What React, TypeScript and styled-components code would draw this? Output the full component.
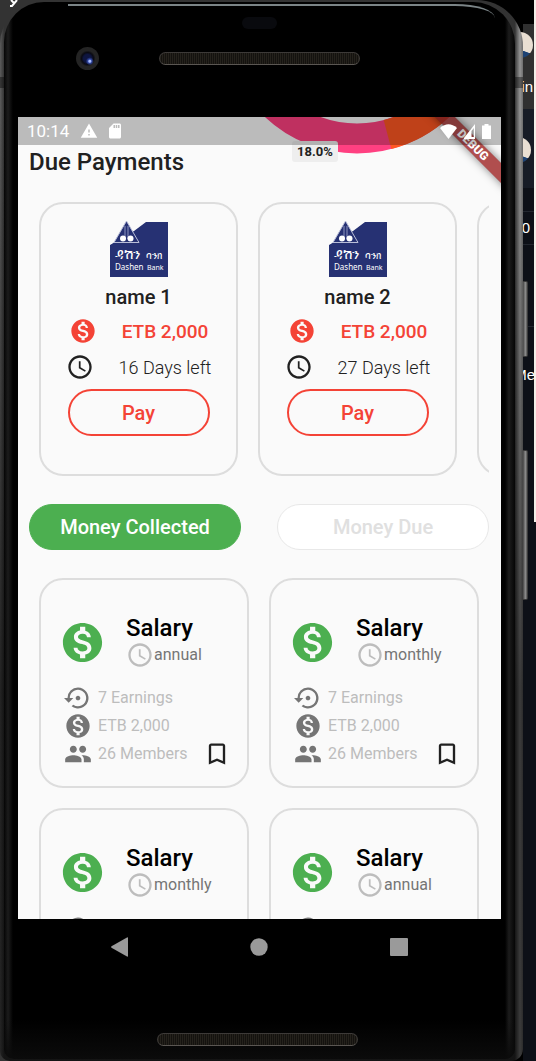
import React from "react";
import styled, { createGlobalStyle } from "styled-components";
import {
  MdAccessTime,
  MdBookmarkBorder,
  MdMonetizationOn,
  MdPeople,
  MdSdCard,
  MdSettingsBackupRestore,
  MdWarning,
} from "react-icons/md";

const GlobalStyle = createGlobalStyle`
  * { box-sizing: border-box; }
  body { margin: 0; background: #0d1017; font-family: Roboto, "Liberation Sans", sans-serif; }
  button { font-family: inherit; margin: 0; padding: 0; border: 0; background: none; cursor: pointer; }
  h1, h2, p { margin: 0; }
  svg { display: block; flex: none; }
`;

/* ---------- desktop behind the emulator ---------- */

const Desktop = styled.div`
  position: relative;
  display: flex;
  height: 100vh;
  overflow: hidden;
  background: linear-gradient(90deg, #333 50%, #000 50%);
`;

const CornerMark = styled.svg`
  position: absolute;
  top: 0;
  left: 9px;
`;

const Strip = styled.aside`
  position: relative;
  flex: none;
  width: 13px;
  background: #0d1017;
`;

const StripTile = styled.div<{ $height: number; $bg?: string; $pad?: number; $line?: boolean }>`
  display: flex;
  flex-direction: column;
  align-items: flex-end;
  height: ${(p) => p.$height}px;
  padding-right: ${(p) => p.$pad ?? 3}px;
  border-top: ${(p) => (p.$line ? "1px solid #22262e" : "0")};
  background: ${(p) => p.$bg ?? "#0d1017"};
  color: #fff;
  font: 15px/20px "Liberation Sans", sans-serif;
`;

const StripLabel = styled.span<{ $gap: number }>`
  flex: none;
  margin-top: ${(p) => p.$gap}px;
`;

const Avatar = styled.span<{ $gap: number }>`
  flex: none;
  width: 26px;
  height: 26px;
  margin-top: ${(p) => p.$gap}px;
  border-radius: 50%;
  background: linear-gradient(200deg, #e9dfd3 62%, #1d4273 64%);
`;

const StripEdge = styled.div`
  position: absolute;
  top: 0;
  right: 0;
  width: 2px;
  height: 522px;
  background: #f3eee8;
`;

const SideKey = styled.div<{ $top: number; $height: number }>`
  position: absolute;
  top: ${(p) => p.$top}px;
  left: 0;
  width: 5px;
  height: ${(p) => p.$height}px;
  border: 1px solid #3a3a3a;
  border-left: 0;
  border-radius: 0 2px 2px 0;
  background: linear-gradient(90deg, #444, #8c8c8c 60%, #555);
`;

/* ---------- phone ---------- */

const Rim = styled.div`
  position: relative;
  z-index: 1;
  flex: 1;
  min-width: 0;
  display: flex;
  padding: 2px 8px 2px 4px;
  border-radius: 44px 46px 12px 10px;
  background:
    linear-gradient(180deg, transparent 77px, rgba(0, 0, 0, 0.4) 77px, rgba(0, 0, 0, 0.4) 88px, transparent 88px),
    linear-gradient(180deg, transparent 10%, rgba(0, 0, 0, 0.6) 65%),
    linear-gradient(90deg, #5c5c5c, #333 4px, #333 calc(100% - 8px), #4a4a4a calc(100% - 7px), #949494 calc(100% - 3px), #6e6e6e);
`;

const Body = styled.div`
  position: relative;
  flex: 1;
  min-width: 0;
  display: flex;
  flex-direction: column;
  padding: 0 14px;
  border-radius: 40px 42px 10px 10px;
  background:
    linear-gradient(0deg, #0b0b0b, transparent 40px),
    linear-gradient(90deg, #050505, #1c1c1c 4px, #000 9px, #000 calc(100% - 10px), #1c1c1c calc(100% - 6px), #050505);
`;

const Shine = styled.div`
  position: absolute;
  top: 2px;
  left: 64px;
  right: 20px;
  height: 14px;
  border-top: 2px solid #7b8487;
  border-top-right-radius: 40px 14px;
`;

const TopBezel = styled.header`
  flex: none;
  height: 115px;
  display: flex;
  flex-direction: column;
  align-items: center;
  padding-top: 15px;
`;

const Sensor = styled.span`
  width: 35px;
  height: 12px;
  border-radius: 6px;
  background: #090a0e;
`;

const BezelRow = styled.div`
  align-self: stretch;
  display: grid;
  grid-template-columns: 1fr 201px 1fr;
  align-items: center;
  justify-items: center;
  margin-top: 18px;
`;

const Camera = styled.span`
  width: 23px;
  height: 23px;
  margin-right: 3px;
  border-radius: 50%;
  background:
    radial-gradient(circle at 60% 62%, #a9bcff 0 1px, rgba(59, 86, 192, 0.8) 2px, transparent 4px),
    radial-gradient(circle at 50% 50%, #0e1540 4px, #0a0a12 6px, #242424 8px);
`;

const Speaker = styled.span`
  width: 201px;
  height: 13px;
  border: 1px solid #3d3a38;
  border-bottom-color: #5a5652;
  border-radius: 7px;
  background: repeating-linear-gradient(90deg, #25221c 0 1px, #14120f 1px 2px);
`;

const Screen = styled.main`
  position: relative;
  flex: 1;
  min-height: 0;
  overflow: hidden;
  background: #fafafa;
  color: #212121;
`;

const BottomBezel = styled.footer`
  flex: none;
  height: 84px;
  display: flex;
  align-items: flex-end;
  justify-content: center;
  padding: 0 4px 13px 0;
`;

const NavBar = styled.nav`
  flex: none;
  height: 56px;
  display: grid;
  grid-template-columns: repeat(3, 1fr);
  place-items: center;
  padding: 0 32px;
`;

/* ---------- status bar and overlays ---------- */

const StatusBar = styled.div`
  position: absolute;
  top: 0;
  left: 0;
  right: 0;
  display: flex;
  align-items: center;
  gap: 11px;
  height: 28px;
  padding: 0 10px 0 9px;
  background: rgba(0, 0, 0, 0.25);
  color: #fff;
  font-size: 17px;
`;

const StatusIcons = styled.span<{ $end?: boolean }>`
  display: flex;
  align-items: center;
  gap: ${(p) => (p.$end ? 7 : 8)}px;
  margin-left: ${(p) => (p.$end ? "auto" : "0")};
`;

const DebugBanner = styled.div`
  position: absolute;
  top: 21px;
  right: -27px;
  width: 110px;
  transform: rotate(45deg);
  background: rgba(160, 40, 40, 0.82);
  box-shadow: 0 0 8px rgba(0, 0, 0, 0.5);
  color: #fff;
  font-size: 12px;
  font-weight: 900;
  line-height: 14px;
  text-align: center;
`;

/* ---------- chart and payments ---------- */

const ChartTail = styled.section`
  position: relative;
  height: 28px;
`;

const Donut = styled.svg`
  position: absolute;
  top: 0;
  left: 240px;
`;

const SliceLabel = styled.span`
  position: absolute;
  top: 24px;
  left: 274px;
  padding: 0 5px;
  border-radius: 3px;
  background: #eee;
  font-size: 13px;
  font-weight: 700;
  line-height: 21px;
`;

const Content = styled.div`
  padding: 0 12px 0 11px;
`;

const Title = styled.h1`
  font-size: 24px;
  font-weight: 500;
  line-height: 34px;
`;

const PaymentList = styled.div`
  display: flex;
  gap: 20px;
  margin-top: 23px;
  padding: 0 10px;
  overflow: hidden;
`;

const PaymentCard = styled.article`
  flex: none;
  display: flex;
  flex-direction: column;
  align-items: center;
  gap: 8px;
  width: 199px;
  height: 274px;
  padding-top: 17px;
  border: 2px solid #ddd;
  border-radius: 24px;
`;

const PayeeName = styled.h2`
  font-size: 20px;
  font-weight: 500;
  line-height: 24px;
`;

const PaymentRow = styled.div`
  display: flex;
  align-items: center;
  gap: 25px;
`;

const Amount = styled.strong`
  color: #f44336;
  font-size: 19px;
  font-weight: 500;
`;

const DaysLeft = styled.span`
  font-size: 18px;
  font-weight: 300;
`;

const PayButton = styled.button`
  width: 142px;
  height: 47px;
  border: 2px solid #f44336;
  border-radius: 24px;
  color: #f44336;
  font-size: 20px;
  font-weight: 500;
`;

/* ---------- collected / due ---------- */

const Tabs = styled.div`
  display: grid;
  grid-template-columns: 1fr 1fr;
  gap: 36px;
  margin-top: 28px;
`;

const Tab = styled.button<{ $active?: boolean }>`
  height: 46px;
  border: 1px solid ${(p) => (p.$active ? "#4caf50" : "#e8e8e8")};
  border-radius: 23px;
  background: ${(p) => (p.$active ? "#4caf50" : "#fff")};
  color: ${(p) => (p.$active ? "#fff" : "#e0e0e0")};
  font-size: 20px;
  font-weight: 500;
`;

const SalaryGrid = styled.section`
  display: grid;
  grid-template-columns: 1fr 1fr;
  gap: 20px;
  margin-top: 28px;
  padding: 0 10px;
`;

const SalaryCard = styled.article`
  height: 210px;
  padding: 35px 16px 0 18px;
  border: 2px solid #ddd;
  border-radius: 24px;
`;

const SalaryHead = styled.div`
  display: flex;
  align-items: center;
  gap: 20px;
`;

const SalaryName = styled.h2`
  color: #000;
  font-size: 24px;
  font-weight: 500;
  line-height: 26px;
`;

const Period = styled.p`
  display: flex;
  align-items: center;
  color: #757575;
  font-size: 16px;
  line-height: 28px;
`;

const SalaryFoot = styled.div`
  display: flex;
  align-items: flex-end;
  justify-content: space-between;
  margin-top: 15px;
  padding-left: 5px;
`;

const Fact = styled.p`
  display: flex;
  align-items: center;
  gap: 6px;
  color: #bdbdbd;
  font-size: 16px;
  line-height: 28px;
`;

const SaveButton = styled.button`
  color: #212121;
`;

function BankLogo() {
  return (
    <svg width="58" height="56" viewBox="0 0 58 56" role="img" aria-label="Dashen Bank">
      <path d="M0 24 L5 21 H20 V12 L24 10 L36 1 H58 V56 H0Z" fill="#263173" />
      <path d="M16.500 0 L29 21.500 H4Z" fill="#263173" stroke="#b9bed8" strokeWidth="1" />
      <path d="M15 5V18M18 5V18" stroke="#8e96c0" strokeWidth="1" />
      <circle cx="13" cy="17.500" r="3" fill="#fff" />
      <circle cx="20.500" cy="17.500" r="3" fill="#fff" />
      <g fill="#fff">
        <text x="5" y="38" fontSize="14">ዳሽን</text>
        <text x="36" y="38" fontSize="10">ባንክ</text>
        <g fontFamily="Noto Sans, sans-serif">
          <text x="5" y="49" fontSize="8">Dashen</text>
          <text x="37" y="49" fontSize="7">Bank</text>
        </g>
      </g>
    </svg>
  );
}

function Payment({ name, days }: { name: string; days: number }) {
  return (
    <PaymentCard>
      <BankLogo />
      <PayeeName>{name}</PayeeName>
      <PaymentRow>
        <MdMonetizationOn size={28} color="#f44336" />
        <Amount>ETB 2,000</Amount>
      </PaymentRow>
      <PaymentRow>
        <MdAccessTime size={28} />
        <DaysLeft>{days} Days left</DaysLeft>
      </PaymentRow>
      <PayButton>Pay</PayButton>
    </PaymentCard>
  );
}

function Salary({ period }: { period: string }) {
  return (
    <SalaryCard>
      <SalaryHead>
        <MdMonetizationOn size={47} color="#4caf50" />
        <div>
          <SalaryName>Salary</SalaryName>
          <Period>
            <MdAccessTime size={28} color="#bdbdbd" />
            {period}
          </Period>
        </div>
      </SalaryHead>
      <SalaryFoot>
        <div>
          <Fact>
            <MdSettingsBackupRestore size={28} color="#757575" />7 Earnings
          </Fact>
          <Fact>
            <MdMonetizationOn size={28} color="#757575" />
            ETB 2,000
          </Fact>
          <Fact>
            <MdPeople size={28} color="#757575" />
            26 Members
          </Fact>
        </div>
        <SaveButton aria-label="Save">
          <MdBookmarkBorder size={28} />
        </SaveButton>
      </SalaryFoot>
    </SalaryCard>
  );
}

const periods = ["annual", "monthly", "monthly", "annual"];

export default function App() {
  return (
    <Desktop>
      <GlobalStyle />
      <CornerMark width="10" height="8" viewBox="0 0 10 8" fill="none" stroke="#fff" strokeWidth="2">
        <path d="M2 0 L5 3 M8 0 L3 6 H1" />
      </CornerMark>
      <Rim>
        <Body>
          <Shine />
          <TopBezel>
            <Sensor />
            <BezelRow>
              <Camera />
              <Speaker />
            </BezelRow>
          </TopBezel>
          <Screen>
            <ChartTail>
              <Donut width="200" height="40" viewBox="240 0 200 40">
                <g fill="none" strokeWidth="30">
                  <circle cx="339" cy="-98" r="119.500" stroke="#ff4081" />
                  <path d="M369.500 17.600 A119.500 119.500 0 0 0 458.500 -98" stroke="#ff5722" />
                </g>
              </Donut>
              <SliceLabel>18.0%</SliceLabel>
            </ChartTail>
            <Content>
              <Title>Due Payments</Title>
              <PaymentList>
                <Payment name="name 1" days={16} />
                <Payment name="name 2" days={27} />
                <PaymentCard />
              </PaymentList>
              <Tabs>
                <Tab $active>Money Collected</Tab>
                <Tab>Money Due</Tab>
              </Tabs>
              <SalaryGrid>
                {periods.map((period, i) => (
                  <Salary key={i} period={period} />
                ))}
              </SalaryGrid>
            </Content>
            <DebugBanner>DEBUG</DebugBanner>
            <StatusBar>
              <span>10:14</span>
              <StatusIcons>
                <MdWarning size={18} />
                <MdSdCard size={18} />
              </StatusIcons>
              <StatusIcons $end>
                <svg width="17" height="15" viewBox="0 0 17 15" fill="#fff">
                  <path d="M0 4 Q8.500 -3.500 17 4 L8.500 15Z" />
                </svg>
                <svg width="11" height="15" viewBox="0 0 11 15" fill="#fff">
                  <path d="M0 14 L11 0 V15 H0Z M7.500 7 V13 H9.800 V4Z" fillRule="evenodd" />
                </svg>
                <svg width="9" height="15" viewBox="0 0 9 15" fill="#fff">
                  <path d="M2.500 0H6.500V1.500H9V15H0V1.500H2.500Z" />
                </svg>
              </StatusIcons>
            </StatusBar>
          </Screen>
          <NavBar>
            <button aria-label="Back">
              <svg width="20" height="20" viewBox="0 0 20 20" fill="#9a9a9a">
                <path d="M1.500 9.300 L17 0.500 Q18 0 18 1 V19 Q18 20 17 19.500 L1.500 10.700 Q0.500 10 1.500 9.300Z" />
              </svg>
            </button>
            <button aria-label="Home">
              <svg width="18" height="18" viewBox="0 0 18 18" fill="#9a9a9a">
                <circle cx="9" cy="9" r="8.700" />
              </svg>
            </button>
            <button aria-label="Overview">
              <svg width="18" height="18" viewBox="0 0 18 18" fill="#9a9a9a">
                <rect width="18" height="18" rx="1" />
              </svg>
            </button>
          </NavBar>
          <BottomBezel>
            <Speaker />
          </BottomBezel>
        </Body>
      </Rim>
      <Strip>
        <StripTile $height={24} $bg="#000" />
        <StripTile $height={85} $bg="#303030">
          <Avatar $gap={8} />
          <StripLabel $gap={19}>in</StripLabel>
        </StripTile>
        <StripTile $height={79} $bg="#171c26" $pad={5}>
          <Avatar $gap={28} />
        </StripTile>
        <StripTile $height={23} />
        <StripTile $height={33} $line $pad={6}>
          <StripLabel $gap={6}>0</StripLabel>
        </StripTile>
        <StripTile $height={82} $line />
        <StripTile $height={90} $line $pad={1}>
          <StripLabel $gap={38}>Me</StripLabel>
        </StripTile>
        <SideKey $top={281} $height={76} />
        <SideKey $top={450} $height={150} />
        <StripEdge />
      </Strip>
    </Desktop>
  );
}
